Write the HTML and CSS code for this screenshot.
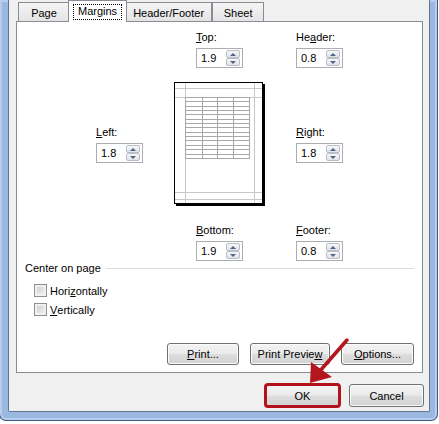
FILE: index.html
```html
<!DOCTYPE html>
<html lang="en">
<head>
	<meta charset="UTF-8">
	<meta name="viewport" content="width=device-width, initial-scale=1">
	<title>Page Setup</title>
	<link rel="stylesheet" href="styles.css">
</head>
<body>

	<div class="window">
		<div class="dialog">

			<div class="tabs">
				<div class="tab">Page</div>
				<div class="tab active"><span class="focus">Margins</span></div>
				<div class="tab">Header/Footer</div>
				<div class="tab">Sheet</div>
			</div>

			<div class="panel">
				<div class="margin-grid">
					<div class="field f-top">
						<label class="field-label"><u>T</u>op:</label>
						<div class="spin-box"><span class="spin-value">1.9</span><span class="spin-btns"><span class="spin-up"></span><span class="spin-down"></span></span></div>
					</div>
					<div class="field f-header">
						<label class="field-label">He<u>a</u>der:</label>
						<div class="spin-box"><span class="spin-value">0.8</span><span class="spin-btns"><span class="spin-up"></span><span class="spin-down"></span></span></div>
					</div>

					<div class="field f-left">
						<label class="field-label"><u>L</u>eft:</label>
						<div class="spin-box"><span class="spin-value">1.8</span><span class="spin-btns"><span class="spin-up"></span><span class="spin-down"></span></span></div>
					</div>
					<svg class="preview" width="92" height="125" viewBox="0 0 92 125">
						<rect x="2" y="2" width="89" height="122" fill="#000"/>
						<rect x="0.5" y="0.5" width="88" height="121" fill="#fff" stroke="#000"/>
						<!-- margin lines -->
						<path d="M11.5 1V121M80.5 1V121M1 6.5H88M1 15.5H88M1 110.5H88M1 117.5H88" stroke="#c8c8c8" fill="none"/>
						<!-- sheet grid -->
						<path d="M11 15.5H76M11 19.5H76M11 24.5H76M11 28.5H76M11 32.5H76M11 37.5H76M11 41.5H76M11 45.5H76M11 50.5H76M11 54.5H76M11 58.5H76M11 63.5H76M11 67.5H76M11 72.5H76M11 76.5H76M11.5 15V77M28.5 15V77M43.5 15V77M59.5 15V77M75.5 15V77" stroke="#a8a8a8" fill="none"/>
					</svg>
					<div class="field f-right">
						<label class="field-label"><u>R</u>ight:</label>
						<div class="spin-box"><span class="spin-value">1.8</span><span class="spin-btns"><span class="spin-up"></span><span class="spin-down"></span></span></div>
					</div>

					<div class="field f-bottom">
						<label class="field-label"><u>B</u>ottom:</label>
						<div class="spin-box"><span class="spin-value">1.9</span><span class="spin-btns"><span class="spin-up"></span><span class="spin-down"></span></span></div>
					</div>
					<div class="field f-footer">
						<label class="field-label"><u>F</u>ooter:</label>
						<div class="spin-box"><span class="spin-value">0.8</span><span class="spin-btns"><span class="spin-up"></span><span class="spin-down"></span></span></div>
					</div>
				</div>

				<div class="group">
					<span>Center on page</span>
					<span class="group-line"></span>
				</div>

				<div class="checks">
					<label class="check-row"><span class="checkbox"></span>Hori<u>z</u>ontally</label>
					<label class="check-row"><span class="checkbox"></span><u>V</u>ertically</label>
				</div>

				<div class="panel-buttons">
					<button class="btn btn-print"><u>P</u>rint...</button>
					<button class="btn btn-preview">Print Previe<u>w</u></button>
					<button class="btn btn-options"><u>O</u>ptions...</button>
				</div>
			</div>

			<div class="footer">
				<button class="btn btn-ok">OK</button>
				<button class="btn">Cancel</button>
			</div>

		</div>
	</div>

	<!-- annotation arrow pointing at OK -->
	<svg class="arrow" width="439" height="424" viewBox="0 0 439 424">
		<line x1="347" y1="340" x2="319" y2="372" stroke="#b3161e" stroke-width="3.5" stroke-linecap="round"/>
		<polygon points="310,383 311,362 332,377" fill="#b3161e"/>
	</svg>

</body>
</html>
```

FILE: styles.css
```css
body {
	margin: 0;
	background: #fff;
	font-family: 'Liberation Sans', Arial, sans-serif;
	font-size: 11px;
	color: #000;
	overflow: hidden;
	position: relative;
	width: 439px;
	height: 424px;
}
u {
	text-decoration: underline;
	text-underline-offset: 1px;
}

/* window frame */
.window {
	box-sizing: border-box;
	width: 439px;
	height: 421px;
	margin-left: -1px;
	padding: 0 7px 8px 8px;
	background: #9ab8e0;
	border: 1px solid #3e5a82;
	border-top: none;
	border-radius: 0 0 7px 7px;
	box-shadow: inset 0 0 0 2px #b7cdeb;
}
.dialog {
	height: 412px;
	box-sizing: border-box;
	background: #f0f0f0;
	border: 1px solid #62748f;
	border-top: none;
	border-radius: 0 0 2px 2px;
}

/* tabs */
.tabs {
	display: flex;
	align-items: flex-end;
	height: 21px;
	padding-left: 9px;
}
.tab {
	box-sizing: border-box;
	min-width: 52px;
	height: 19px;
	padding: 4px 7px 0;
	line-height: 13px;
	text-align: center;
	white-space: nowrap;
	border: 1px solid #898c95;
	border-bottom: none;
	background: linear-gradient(#f5f5f5, #e4e4e4);
}
.tab.active {
	position: relative;
	z-index: 1;
	height: 22px;
	margin: 0 -2px -1px;
	padding: 4px 9px 0;
	background: #fff;
}
.focus {
	display: inline-block;
	margin: 0 -4px;
	padding: 0 4px 1px;
	outline: 1px dotted #000;
}

/* panel */
.panel {
	box-sizing: border-box;
	height: 352px;
	margin: 0 6px 0 7px;
	background: #fff;
	border: 1px solid #898c95;
}
.margin-grid {
	display: grid;
	grid-template-columns: 78px 122px 100px;
	margin-left: 79px;
	padding-top: 9px;
}
.field-label {
	display: block;
	line-height: 13px;
	margin-bottom: 4px;
}
.f-top { grid-column: 2; grid-row: 1; padding-left: 22px; }
.f-header { grid-column: 3; grid-row: 1; }
.f-left { grid-column: 1; grid-row: 2; margin-top: 58px; }
.preview { grid-column: 2; grid-row: 2; margin-top: 14px; display: block; }
.f-right { grid-column: 3; grid-row: 2; margin-top: 58px; }
.f-bottom { grid-column: 2; grid-row: 3; padding-left: 22px; margin-top: 17px; }
.f-footer { grid-column: 3; grid-row: 3; margin-top: 17px; }

.spin-box {
	box-sizing: border-box;
	display: flex;
	align-items: center;
	width: 47px;
	height: 20px;
	padding-left: 4px;
	border: 1px solid #abadb3;
	background: #fff;
}
.spin-value {
	flex: 1;
}
.spin-btns {
	display: flex;
	flex-direction: column;
	width: 14px;
	height: 16px;
	margin-right: 2px;
}
.spin-btns span {
	flex: 1;
	box-sizing: border-box;
	display: flex;
	align-items: center;
	justify-content: center;
	border: 1px solid #b9bec7;
	border-radius: 2px;
	background: linear-gradient(#f7f7f7, #dfe2e7);
}
.spin-up::after {
	content: "";
	border-left: 3px solid transparent;
	border-right: 3px solid transparent;
	border-bottom: 3px solid #4f6488;
}
.spin-down::after {
	content: "";
	border-left: 3px solid transparent;
	border-right: 3px solid transparent;
	border-top: 3px solid #4f6488;
}

/* center on page */
.group {
	display: flex;
	align-items: center;
	margin: 1px 8px 0;
	line-height: 13px;
}
.group-line {
	flex: 1;
	margin-left: 5px;
	border-top: 1px solid #d8dde3;
}
.checks {
	margin-top: 6px;
	padding-left: 17px;
}
.check-row {
	display: flex;
	align-items: center;
	height: 19px;
}
.checkbox {
	box-sizing: border-box;
	width: 13px;
	height: 13px;
	margin-right: 3px;
	border: 1px solid #8e8f8f;
	background: linear-gradient(135deg, #c8ccd2, #f4f4f4);
	box-shadow: inset 0 0 0 2px #f1f1f1;
}

/* buttons */
.btn {
	box-sizing: border-box;
	height: 22px;
	padding: 0;
	font: inherit;
	color: #000;
	border: 1px solid #707070;
	border-radius: 3px;
	background: linear-gradient(#f3f3f3 0%, #ebebeb 48%, #dddddd 52%, #d2d2d2 100%);
	box-shadow: inset 0 0 0 1px #fbfbfb;
}
.panel-buttons {
	display: flex;
	justify-content: flex-end;
	gap: 11px;
	margin-top: 24px;
	padding-right: 8px;
}
.btn-print { width: 72px; }
.btn-preview { width: 80px; }
.btn-options { width: 73px; }

.footer {
	display: flex;
	justify-content: flex-end;
	gap: 9px;
	padding: 11px 5px 4px;
}
.footer .btn {
	width: 75px;
	height: 23px;
}
.btn-ok {
	outline: 3px solid #b3121c;
	outline-offset: -2px;
}

.arrow {
	position: absolute;
	left: 0;
	top: 0;
	pointer-events: none;
}
```
